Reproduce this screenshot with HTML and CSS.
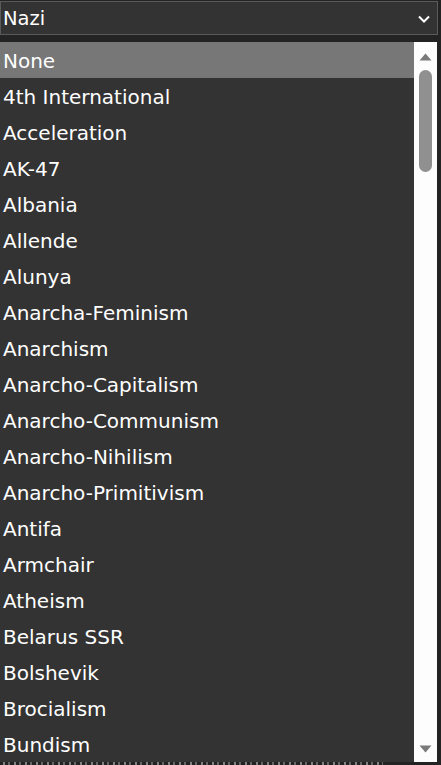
FILE: index.html
```html
<!DOCTYPE html>
<html>
<head>
<meta charset="utf-8">
<link rel="stylesheet" href="styles.css">
</head>
<body>
<div class="page">
  <div class="select">
    <span class="select-value">Nazi</span>
    <svg class="chevron" width="14" height="10" viewBox="0 0 14 10"><path d="M2 2.5 L7 7.5 L12 2.5" fill="none" stroke="#fff" stroke-width="2"/></svg>
  </div>
  <div class="listbox">
    <ul class="options">
      <li class="option selected">None</li>
      <li class="option">4th International</li>
      <li class="option">Acceleration</li>
      <li class="option">AK-47</li>
      <li class="option">Albania</li>
      <li class="option">Allende</li>
      <li class="option">Alunya</li>
      <li class="option">Anarcha-Feminism</li>
      <li class="option">Anarchism</li>
      <li class="option">Anarcho-Capitalism</li>
      <li class="option">Anarcho-Communism</li>
      <li class="option">Anarcho-Nihilism</li>
      <li class="option">Anarcho-Primitivism</li>
      <li class="option">Antifa</li>
      <li class="option">Armchair</li>
      <li class="option">Atheism</li>
      <li class="option">Belarus SSR</li>
      <li class="option">Bolshevik</li>
      <li class="option">Brocialism</li>
      <li class="option">Bundism</li>
    </ul>
    <div class="scrollbar">
      <svg class="arrow" width="13" height="8" viewBox="0 0 13 8"><path d="M6.5 0.5 L12.5 7.5 L0.5 7.5 Z" fill="#7a7a7a"/></svg>
      <div class="track"><div class="thumb"></div></div>
      <svg class="arrow" width="13" height="8" viewBox="0 0 13 8"><path d="M0.5 0.5 L12.5 0.5 L6.5 7.5 Z" fill="#7a7a7a"/></svg>
    </div>
  </div>
  <div class="under"></div>
</div>
</body>
</html>
```
FILE: styles.css
```css
html, body {
  margin: 0;
  padding: 0;
  background: #232323;
  width: 441px;
  height: 765px;
  overflow: hidden;
}
.page {
  font-family: "DejaVu Sans", Verdana, sans-serif;
  color: #fff;
  display: flex;
  flex-direction: column;
  width: 441px;
}
.select {
  margin-top: 1px;
  box-sizing: border-box;
  width: 438px;
  height: 34px;
  border: 1px solid #5a5a5a;
  background: #333;
  display: flex;
  align-items: center;
  justify-content: space-between;
  padding: 1px 6px 0 2px;
  font-size: 19.5px;
}
.select-value { line-height: 1; }
.chevron { display: block; }
.listbox {
  margin-top: 7px;
  width: 437px;
  height: 720px;
  display: flex;
  background: #333;
  overflow: hidden;
}
.options {
  list-style: none;
  margin: 0;
  padding: 0;
  flex: 1;
}
.option {
  box-sizing: border-box;
  height: 36px;
  line-height: 34px;
  padding: 2px 0 0 3px;
  font-size: 20px;
  white-space: nowrap;
}
.option.selected { background: #777; }
.scrollbar {
  width: 23px;
  background: #fdfdfd;
  display: flex;
  flex-direction: column;
  align-items: center;
  padding: 11px 0 9px;
  box-sizing: border-box;
}
.arrow { display: block; flex: none; }
.track {
  flex: 1;
  width: 100%;
  display: flex;
  justify-content: center;
  padding-top: 9px;
}
.thumb {
  width: 13px;
  height: 102px;
  border-radius: 7px;
  background: #909090;
}
.under {
  height: 3px;
  margin-left: 3px;
  width: 380px;
  background: repeating-linear-gradient(90deg, #9a9a9a 0 2px, transparent 2px 5px, #777 5px 7px, transparent 7px 11px);
  opacity: 0.8;
}
```
